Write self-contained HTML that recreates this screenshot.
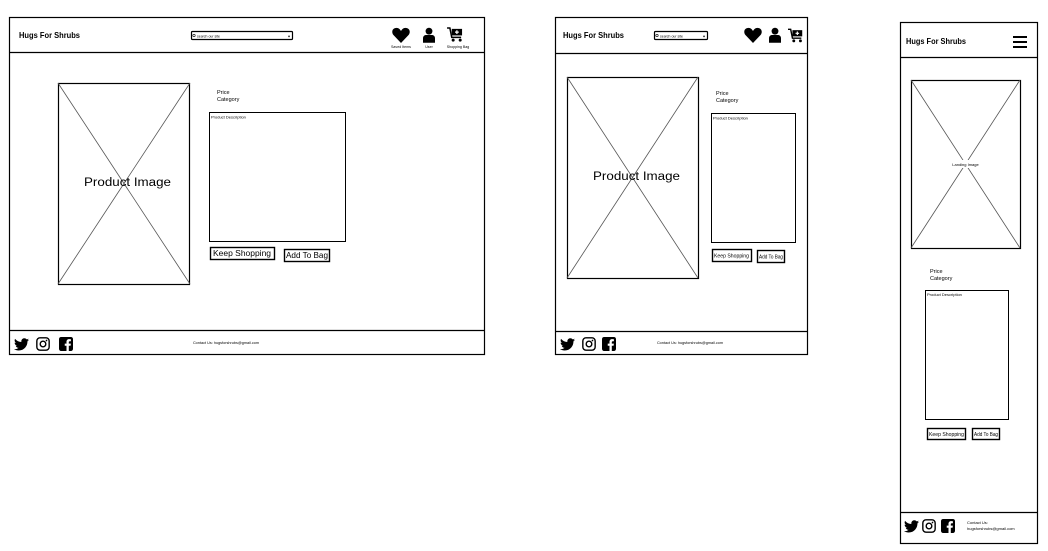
<!DOCTYPE html>
<html><head><meta charset="utf-8"><style>
html,body{margin:0;padding:0;background:#fff;width:1048px;height:551px;overflow:hidden}
svg{display:block}
text{font-family:"Liberation Sans",sans-serif;fill:#000}
</style></head><body>
<svg width="1048" height="551" viewBox="0 0 1048 551" xmlns="http://www.w3.org/2000/svg">
<defs>
<symbol id="heart" viewBox="0 0 20 18"><path d="M10 18 L1.5 9 C-1 6 0 1 5 1 C7.5 1 9 3 10 4.5 C11 3 12.5 1 15 1 C20 1 21 6 18.5 9 Z" fill="#000"/></symbol>
<symbol id="user" viewBox="0 0 14 18"><circle cx="7" cy="4.5" r="4" fill="#000"/><path d="M0 18 V13 C0 10 2 9 4 9 H10 C12 9 14 10 14 13 V18 Z" fill="#000"/></symbol>
<symbol id="cart" viewBox="0 0 18 16"><path d="M0 1 H3 L5 11 H15" fill="none" stroke="#000" stroke-width="1.6"/><rect x="5" y="2" width="11" height="7" fill="#000"/><path d="M10.5 3.5 V7.5 M8.5 5.5 H12.5" stroke="#fff" stroke-width="1.3"/><circle cx="6.5" cy="14" r="1.6" fill="#000"/><circle cx="14" cy="14" r="1.6" fill="#000"/></symbol>
<symbol id="tw" viewBox="0 0 24 20"><path d="M24 2.4c-.9.4-1.8.7-2.8.8 1-.6 1.8-1.6 2.200-2.7-1 .6-2 1-3.1 1.2C19.3.7 18 0 16.6 0c-2.7 0-4.9 2.2-4.9 4.9 0 .4 0 .8.1 1.1C7.7 5.8 4.1 3.9 1.7.9c-.4.7-.7 1.6-.7 2.5 0 1.7.9 3.2 2.2 4.1-.8 0-1.6-.2-2.2-.6v.1c0 2.4 1.7 4.4 3.9 4.8-.4.1-.8.2-1.3.2-.3 0-.6 0-.9-.1.6 2 2.4 3.4 4.6 3.4-1.7 1.3-3.8 2.1-6.1 2.1-.4 0-.8 0-1.2-.1 2.2 1.4 4.8 2.2 7.5 2.2 9.1 0 14-7.5 14-14v-.6c1-.7 1.8-1.6 2.5-2.5z" fill="#000"/></symbol>
<symbol id="ig" viewBox="0 0 20 20"><rect x="1.2" y="1.2" width="17.6" height="17.6" rx="4.5" fill="none" stroke="#000" stroke-width="2"/><circle cx="10" cy="10" r="4" fill="none" stroke="#000" stroke-width="2"/><circle cx="15" cy="5" r="1.2" fill="#000"/></symbol>
<symbol id="fb" viewBox="0 0 20 20"><rect x="0" y="0" width="20" height="20" rx="3" fill="#000"/><path d="M14 20 V12.5 H16.5 L17 9.5 H14 V7.5 C14 6.6 14.3 6 15.6 6 H17 V3.3 C16.6 3.2 15.6 3.1 14.5 3.1 C12.2 3.1 10.7 4.5 10.7 7 V9.5 H8.2 V12.5 H10.7 V20 Z" fill="#fff"/></symbol>
</defs>

<g fill="none" stroke="#000">
<rect x="9.5" y="17.5" width="475" height="337" stroke-width="1.2"/>
<line x1="9" y1="52.5" x2="484" y2="52.5" stroke-width="1.2"/>
<line x1="9" y1="330.5" x2="484" y2="330.5" stroke-width="1.2"/>
<rect x="191.5" y="31.5" width="101" height="8" rx="1" stroke-width="1.2"/>
<rect x="58.5" y="83.5" width="131" height="201" stroke-width="1.2"/>
<line x1="58" y1="83" x2="190" y2="284" stroke="#555" stroke-width="0.8"/>
<line x1="190" y1="83" x2="58" y2="284" stroke="#555" stroke-width="0.8"/>
<rect x="209.5" y="112.5" width="136" height="129" stroke-width="1"/>
<rect x="210.5" y="247.5" width="64" height="12" stroke-width="1.4"/>
<rect x="284.5" y="249.5" width="45" height="12" stroke-width="1.4"/>

<rect x="555.5" y="17.5" width="252" height="337" stroke-width="1.2"/>
<line x1="555" y1="53.5" x2="807" y2="53.5" stroke-width="1.2"/>
<line x1="555" y1="331.5" x2="807" y2="331.5" stroke-width="1.2"/>
<rect x="654.5" y="31.5" width="53" height="8" rx="1" stroke-width="1.2"/>
<rect x="567.5" y="77.5" width="131" height="201" stroke-width="1.2"/>
<line x1="567" y1="77" x2="698" y2="278" stroke="#555" stroke-width="0.8"/>
<line x1="698" y1="77" x2="567" y2="278" stroke="#555" stroke-width="0.8"/>
<rect x="711.5" y="113.5" width="84" height="129" stroke-width="1"/>
<rect x="712.5" y="249.5" width="39" height="12" stroke-width="1.4"/>
<rect x="757.5" y="250.5" width="27" height="12" stroke-width="1.4"/>

<rect x="900.5" y="22.5" width="137" height="521" stroke-width="1.2"/>
<line x1="900" y1="57.5" x2="1037" y2="57.5" stroke-width="1.2"/>
<line x1="900" y1="512.5" x2="1037" y2="512.5" stroke-width="1.2"/>
<rect x="911.5" y="80.5" width="109" height="168" stroke-width="1.2"/>
<line x1="911" y1="80" x2="1020" y2="248" stroke="#555" stroke-width="0.8"/>
<line x1="1020" y1="80" x2="911" y2="248" stroke="#555" stroke-width="0.8"/>
<rect x="925.5" y="290.5" width="83" height="129" stroke-width="1"/>
<rect x="927.5" y="428.5" width="38" height="11" stroke-width="1.4"/>
<rect x="972.5" y="428.5" width="27" height="11" stroke-width="1.4"/>
<path d="M1013 37 H1027 M1013 42 H1027 M1013 47 H1027" stroke-width="2"/>
</g>
<rect x="949" y="160" width="33" height="8" fill="#fff"/>

<use href="#heart" x="392" y="27" width="18" height="16"/>
<use href="#user" x="423" y="27" width="12" height="16"/>
<use href="#cart" x="447" y="27" width="17" height="15"/>
<use href="#heart" x="744" y="27" width="18" height="16"/>
<use href="#user" x="769" y="27" width="12" height="16"/>
<use href="#cart" x="788" y="28" width="16" height="15"/>
<use href="#tw" x="14" y="338" width="15" height="13"/>
<use href="#ig" x="36" y="337" width="14" height="14"/>
<use href="#fb" x="59" y="337" width="14" height="14"/>
<use href="#tw" x="560" y="338" width="15" height="13"/>
<use href="#ig" x="582" y="337" width="14" height="14"/>
<use href="#fb" x="602" y="337" width="14" height="14"/>
<use href="#tw" x="904" y="520" width="15" height="13"/>
<use href="#ig" x="922" y="519" width="14" height="14"/>
<use href="#fb" x="941" y="519" width="14" height="14"/>

<text x="19" y="38" font-size="8.5" font-weight="bold" textLength="61" lengthAdjust="spacingAndGlyphs">Hugs For Shrubs</text>
<text x="197" y="37.5" font-size="3.5">search our site</text>
<circle cx="194" cy="35.5" r="1.2" fill="none" stroke="#000" stroke-width="0.6"/>
<text x="288" y="37.5" font-size="4">♦</text>
<text x="401" y="48" font-size="3.6" text-anchor="middle">Saved Items</text>
<text x="429" y="48" font-size="3.6" text-anchor="middle">User</text>
<text x="458" y="48" font-size="3.6" text-anchor="middle">Shopping Bag</text>
<text x="217" y="94" font-size="5.5">Price</text>
<text x="217" y="101" font-size="5.5">Category</text>
<text x="211" y="118.5" font-size="4">Product Description</text>
<text x="84" y="186" font-size="11.5" textLength="87" lengthAdjust="spacingAndGlyphs">Product Image</text>
<text x="213" y="256" font-size="8" textLength="58" lengthAdjust="spacingAndGlyphs">Keep Shopping</text>
<text x="286" y="258" font-size="8" textLength="42" lengthAdjust="spacingAndGlyphs">Add To Bag</text>
<text x="226" y="344" font-size="3.8" text-anchor="middle" fill="#333">Contact Us: hugsforshrubs@gmail.com</text>

<text x="563" y="38" font-size="8.5" font-weight="bold" textLength="61" lengthAdjust="spacingAndGlyphs">Hugs For Shrubs</text>
<circle cx="657" cy="35.5" r="1.2" fill="none" stroke="#000" stroke-width="0.6"/>
<text x="660" y="37.5" font-size="3.5">search our site</text>
<text x="703" y="37.5" font-size="4">♦</text>
<text x="716" y="95" font-size="5.5">Price</text>
<text x="716" y="102" font-size="5.5">Category</text>
<text x="713" y="119.5" font-size="4">Product Description</text>
<text x="593" y="180" font-size="11.5" textLength="87" lengthAdjust="spacingAndGlyphs">Product Image</text>
<text x="714" y="257.5" font-size="5.2" textLength="35" lengthAdjust="spacingAndGlyphs">Keep Shopping</text>
<text x="759" y="258.5" font-size="5.2" textLength="24" lengthAdjust="spacingAndGlyphs">Add To Bag</text>
<text x="690" y="344" font-size="3.8" text-anchor="middle" fill="#333">Contact Us: hugsforshrubs@gmail.com</text>

<text x="906" y="44" font-size="8" font-weight="bold" textLength="60" lengthAdjust="spacingAndGlyphs">Hugs For Shrubs</text>
<text x="965.5" y="166" font-size="4" text-anchor="middle" fill="#333">Landing Image</text>
<text x="930" y="273" font-size="5.5">Price</text>
<text x="930" y="280" font-size="5.5">Category</text>
<text x="927" y="296" font-size="4">Product Description</text>
<text x="929" y="436" font-size="5.2" textLength="35" lengthAdjust="spacingAndGlyphs">Keep Shopping</text>
<text x="974" y="436" font-size="5.2" textLength="24" lengthAdjust="spacingAndGlyphs">Add To Bag</text>
<text x="967" y="524" font-size="4" fill="#333">Contact Us:</text>
<text x="967" y="530" font-size="4" fill="#333">hugsforshrubs@gmail.com</text>
</svg>
</body></html>
